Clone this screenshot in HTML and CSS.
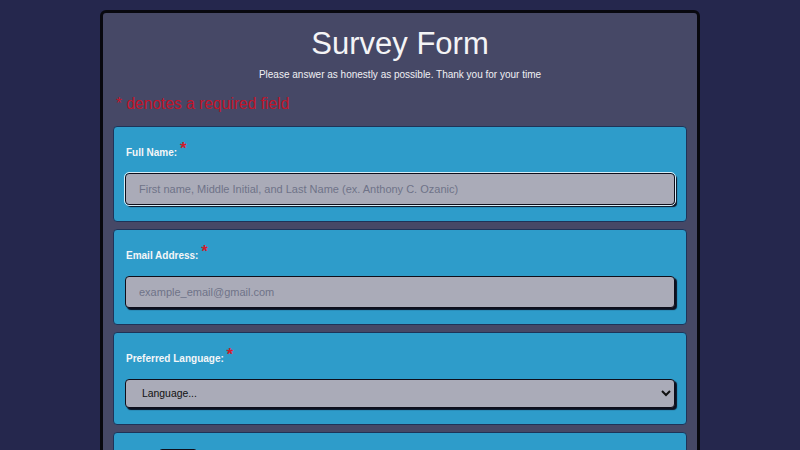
FILE: index.html
```html
<!DOCTYPE html>
<html lang="en">
<head>
<meta charset="utf-8">
<title>Survey Form</title>
<link rel="stylesheet" href="styles.css">
</head>
<body>
<main class="container">
  <h1 class="title">Survey Form</h1>
  <p class="description">Please answer as honestly as possible. Thank you for your time</p>
  <p class="required-note">* denotes a required field</p>
  <form class="form">
    <div class="card">
      <label class="label" for="name">Full Name: <span class="star">*</span></label>
      <input class="field focused" id="name" type="text" placeholder="First name, Middle Initial, and Last Name (ex. Anthony C. Ozanic)">
    </div>
    <div class="card">
      <label class="label" for="email">Email Address: <span class="star">*</span></label>
      <input class="field" id="email" type="email" placeholder="example_email@gmail.com">
    </div>
    <div class="card">
      <label class="label" for="lang">Preferred Language: <span class="star">*</span></label>
      <select class="field select" id="lang">
        <option>Language...</option>
      </select>
    </div>
    <div class="card">
      <div class="row">
        <label class="label inline" for="age">Age:</label>
        <input class="small-field" id="age" type="number">
      </div>
    </div>
  </form>
</main>
</body>
</html>
```
FILE: styles.css
```css
html, body {
  margin: 0;
  padding: 0;
}
body {
  background: #25274d;
  font-family: "Liberation Sans", Arial, sans-serif;
  height: 450px;
  overflow: hidden;
}
.container {
  box-sizing: content-box;
  width: 574px;
  margin: 10px auto 0;
  background: #464866;
  border: 3px solid #08080f;
  border-radius: 6px;
  padding: 0 10px 40px;
}
.title {
  margin: 12px 0 0;
  font-size: 31px;
  line-height: 38px;
  font-weight: normal;
  text-align: center;
  color: #f4f4f6;
}
.description {
  margin: 5px 0 0;
  font-size: 10px;
  line-height: 14px;
  text-align: center;
  color: #f0f0f4;
}
.required-note {
  margin: 12px 0 0 3px;
  font-size: 15.6px;
  line-height: 20px;
  color: #c2142a;
}
.form {
  margin-top: 12px;
  display: flex;
  flex-direction: column;
  gap: 7px;
}
.card {
  background: #2e9cca;
  border: 1px solid #1e3358;
  border-radius: 4px;
  padding: 19px 11px 16px;
  display: flex;
  flex-direction: column;
}
.label {
  display: block;
  font-size: 10px;
  line-height: 14px;
  font-weight: bold;
  color: #f4f6f8;
  margin: 0 0 13px 1px;
}
.star {
  color: #d01c2c;
  font-size: 17px;
  font-weight: bold;
  position: relative;
  top: -2px;
  line-height: 0;
}
.field {
  box-sizing: border-box;
  width: 550px;
  height: 32px;
  background: #aaabb8;
  border: 1px solid #0e0e1a;
  border-radius: 4px;
  padding: 0 13px;
  font-family: "Liberation Sans", Arial, sans-serif;
  font-size: 11px;
  color: #111;
  box-shadow: 2px 2px 1px #0c1020;
}
.field::placeholder {
  color: #6f7388;
}
.focused {
  outline: 1px solid #d6eef8;
  outline-offset: 0;
}
.select {
  height: 29px;
  padding: 0 7px 0 12px;
  font-size: 10.4px;
  color: #111;
}
.row {
  display: flex;
  align-items: flex-end;
  gap: 8px;
}
.inline {
  margin: 0;
  width: 26px;
}
.small-field {
  box-sizing: border-box;
  width: 38px;
  height: 34px;
  margin-top: -3px;
  background: #aaabb8;
  border: 1px solid #0e0e1a;
  border-radius: 3px;
}
```
